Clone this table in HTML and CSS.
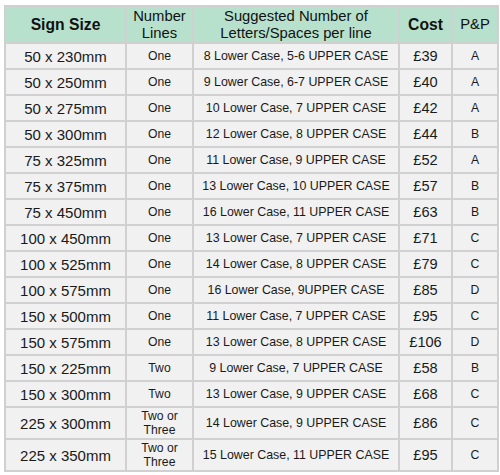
FILE: index.html
```html
<!DOCTYPE html>
<html lang="en">
<head>
<meta charset="utf-8">
<title>Sign Sizes</title>
<link rel="stylesheet" href="styles.css">
</head>
<body>
<div class="sheet">
<table class="prices">
<colgroup>
<col class="c-size"><col class="c-lines"><col class="c-letters"><col class="c-cost"><col class="c-pp">
</colgroup>
<thead>
<tr>
<th class="bold">Sign Size</th>
<th>Number<br>Lines</th>
<th>Suggested Number of<br>Letters/Spaces per line</th>
<th class="bold">Cost</th>
<th>P&amp;P</th>
</tr>
</thead>
<tbody>
<tr><td class="size">50 x 230mm</td><td class="lines">One</td><td class="letters">8 Lower Case, 5-6 UPPER CASE</td><td class="cost">£39</td><td class="pp">A</td></tr>
<tr><td class="size">50 x 250mm</td><td class="lines">One</td><td class="letters">9 Lower Case, 6-7 UPPER CASE</td><td class="cost">£40</td><td class="pp">A</td></tr>
<tr><td class="size">50 x 275mm</td><td class="lines">One</td><td class="letters">10 Lower Case, 7 UPPER CASE</td><td class="cost">£42</td><td class="pp">A</td></tr>
<tr><td class="size">50 x 300mm</td><td class="lines">One</td><td class="letters">12 Lower Case, 8 UPPER CASE</td><td class="cost">£44</td><td class="pp">B</td></tr>
<tr><td class="size">75 x 325mm</td><td class="lines">One</td><td class="letters">11 Lower Case, 9 UPPER CASE</td><td class="cost">£52</td><td class="pp">A</td></tr>
<tr><td class="size">75 x 375mm</td><td class="lines">One</td><td class="letters">13 Lower Case, 10 UPPER CASE</td><td class="cost">£57</td><td class="pp">B</td></tr>
<tr><td class="size">75 x 450mm</td><td class="lines">One</td><td class="letters">16 Lower Case, 11 UPPER CASE</td><td class="cost">£63</td><td class="pp">B</td></tr>
<tr><td class="size">100 x 450mm</td><td class="lines">One</td><td class="letters">13 Lower Case, 7 UPPER CASE</td><td class="cost">£71</td><td class="pp">C</td></tr>
<tr><td class="size">100 x 525mm</td><td class="lines">One</td><td class="letters">14 Lower Case, 8 UPPER CASE</td><td class="cost">£79</td><td class="pp">C</td></tr>
<tr><td class="size">100 x 575mm</td><td class="lines">One</td><td class="letters">16 Lower Case, 9UPPER CASE</td><td class="cost">£85</td><td class="pp">D</td></tr>
<tr><td class="size">150 x 500mm</td><td class="lines">One</td><td class="letters">11 Lower Case, 7 UPPER CASE</td><td class="cost">£95</td><td class="pp">C</td></tr>
<tr><td class="size">150 x 575mm</td><td class="lines">One</td><td class="letters">13 Lower Case, 8 UPPER CASE</td><td class="cost">£106</td><td class="pp">D</td></tr>
<tr><td class="size">150 x 225mm</td><td class="lines">Two</td><td class="letters">9 Lower Case, 7 UPPER CASE</td><td class="cost">£58</td><td class="pp">B</td></tr>
<tr><td class="size">150 x 300mm</td><td class="lines">Two</td><td class="letters">13 Lower Case, 9 UPPER CASE</td><td class="cost">£68</td><td class="pp">C</td></tr>
<tr class="tall"><td class="size">225 x 300mm</td><td class="lines">Two or<br>Three</td><td class="letters">14 Lower Case, 9 UPPER CASE</td><td class="cost">£86</td><td class="pp">C</td></tr>
<tr class="tall"><td class="size">225 x 350mm</td><td class="lines">Two or<br>Three</td><td class="letters">15 Lower Case, 11 UPPER CASE</td><td class="cost">£95</td><td class="pp">C</td></tr>
</tbody>
</table>
</div>
</body>
</html>
```
FILE: styles.css
```css
html, body {
  margin: 0;
  padding: 0;
  background: #ffffff;
}
body {
  font-family: "Liberation Sans", Arial, sans-serif;
  color: #1f1f1f;
}
.sheet {
  padding: 5px 0 0 4px;
}
.prices {
  border-collapse: collapse;
  table-layout: fixed;
  width: 493px;
}
.c-size { width: 121px; }
.c-lines { width: 67px; }
.c-letters { width: 206px; }
.c-cost { width: 53px; }
.c-pp { width: 46px; }

.prices th,
.prices td {
  border: 2px solid #d0d0d0;
  padding: 0;
  text-align: center;
  vertical-align: middle;
  white-space: nowrap;
}
.prices thead tr {
  height: 37px;
}
.prices th {
  background: #b7e1cd;
  font-weight: normal;
  font-size: 14.8px;
  line-height: 17px;
  color: #111111;
}
.prices th.bold {
  font-weight: bold;
  font-size: 15.7px;
}
.prices tbody tr {
  height: 26px;
}
.prices tbody tr.tall {
  height: 32px;
}
.prices td {
  background: #f1f1f1;
  color: #1a1a1a;
}
.size {
  font-size: 15px;
}
.lines {
  font-size: 12.2px;
  line-height: 14.5px;
}
.letters {
  font-size: 12.4px;
}
.cost {
  font-size: 14.6px;
}
.pp {
  font-size: 12.2px;
}
```
